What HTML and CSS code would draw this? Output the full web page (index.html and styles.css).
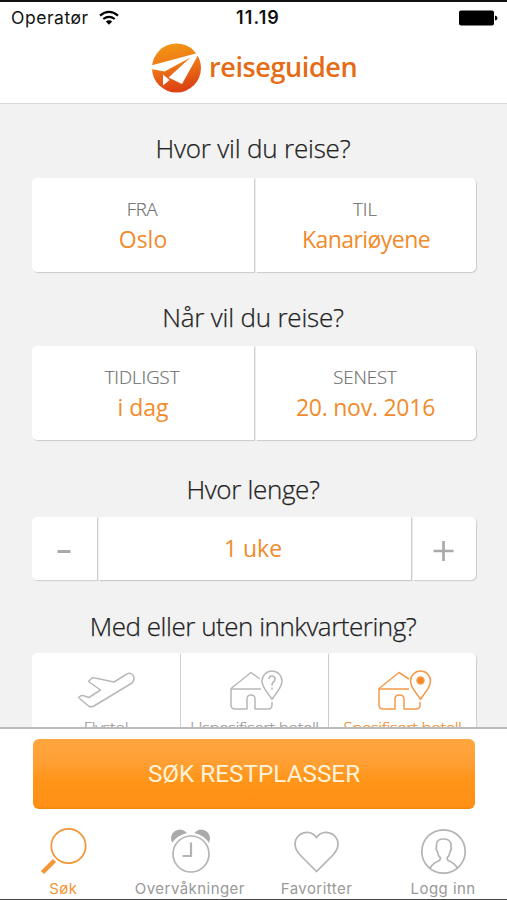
FILE: index.html
```html
<!DOCTYPE html>
<html lang="no">
<head>
<meta charset="utf-8">
<title>Reiseguiden</title>
<link rel="stylesheet" href="styles.css">
</head>
<body>
<div class="app">
  <header class="header">
    <div class="status">
      <div class="carrier"><span class="operator">Operatør</span>
        <svg class="wifi" width="20" height="16" viewBox="0 0 20 16" fill="none" stroke="#000" stroke-width="2.2"><path d="M1 5.6Q10-1.8 19 5.6M4.3 9Q10 4.6 15.7 9"/><path d="M6.8 11.4Q10 9.2 13.2 11.4L10 14.8Z" fill="#000" stroke="none"/></svg>
      </div>
      <span class="time">11.19</span>
      <svg class="battery" width="40" height="16" viewBox="0 0 40 16"><rect x="1" y=".5" width="35" height="15" rx="2"/><path d="M37 5.5Q39.5 6 39.500 8T37 10.5Z"/></svg>
    </div>
    <div class="brand">
      <svg class="logo" width="50" height="50" viewBox="0 0 50 50">
        <defs><linearGradient id="sun" x1="0" y1="0" x2=".2" y2="1"><stop offset="0" stop-color="#f39a12"/><stop offset=".5" stop-color="#ee7818"/><stop offset="1" stop-color="#dc4314"/></linearGradient></defs>
        <circle cx="25.500" cy="25" r="24.500" fill="url(#sun)"/>
        <path fill="#fff" d="M0 22.500L48.500 9.500 31 41 17.500 34.500 39.500 14.500 13.500 28.500 0 26ZM12 31.500L18.500 37 12 42.500Z"/>
      </svg>
      <span class="wordmark">reiseguiden</span>
    </div>
  </header>

  <main class="form">
    <h2 class="question"><span class="q1">Hvor vil du reise?</span></h2>
    <div class="row">
      <div class="cell"><span class="label fra">FRA</span><span class="value oslo">Oslo</span></div>
      <div class="cell"><span class="label til">TIL</span><span class="value kan">Kanariøyene</span></div>
    </div>
    <h2 class="question when"><span class="q2">Når vil du reise?</span></h2>
    <div class="row">
      <div class="cell"><span class="label tid">TIDLIGST</span><span class="value idag">i dag</span></div>
      <div class="cell"><span class="label sen">SENEST</span><span class="value dato">20. nov. 2016</span></div>
    </div>
    <h2 class="question length"><span class="q3">Hvor lenge?</span></h2>
    <div class="row stepper">
      <div class="cell"><svg width="16" height="26" viewBox="0 0 16 26"><path d="M.5 16.500H13.500" stroke="#a9abab" stroke-width="3"/></svg></div>
      <div class="cell"><span class="value uke">1 uke</span></div>
      <div class="cell"><svg width="24" height="26" viewBox="0 0 24 26"><path d="M.5 16H20.500M10.500 6V26" stroke="#a9abab" stroke-width="2.700"/></svg></div>
    </div>
    <h2 class="question stay"><span class="q4">Med eller uten innkvartering?</span></h2>
    <div class="row options">
      <div class="cell option">
        <svg width="60" height="44" viewBox="0 0 60 44"><path d="M2.500 27.500Q5 25 7 25.500L13 27.500 24.500 20 12.500 11.500 16 8Q17 7.500 19 8L38 12 50 4.500Q55 1.500 57.500 6 59 10 56 13L18 36Q15 37.500 12.500 36Z"/></svg>
        <span class="caption">Flystol</span>
      </div>
      <div class="cell option">
        <svg width="60" height="44" viewBox="2 0 60 44"><path d="M37 9L28 2.500 8 18.500V35Q8 39 12 39H24V29Q24 25 28 25T32 29V39H45Q49 39 49 35V32M8 19H38M49 29.500C46 23.500 39 18.500 39 11A10 10 0 0 1 59 11C59 18.500 52 23.500 49 29.500Z"/><path d="M46 9Q46 6 49 6T52 9Q52 11 50 12.500 49 13.500 49 15.500M49 17.500V19.500" stroke-width="1.700"/></svg>
        <span class="caption">Uspesifisert hotell</span>
      </div>
      <div class="cell option active">
        <svg width="60" height="44" viewBox="1 0 60 44"><path d="M37 9L27 2.500 7 18.500V35Q7 39 11 39H23V29Q23 25 27.500 25T32 29V39H44Q48 39 48 35V32M7 19H37M48.500 29.500C45.500 23.500 38.500 18.500 38.500 11A10 10 0 0 1 58.500 11C58.500 18.500 51.500 23.500 48.500 29.500Z"/><circle cx="48.500" cy="10.500" r="3.500" fill="#f3892b"/></svg>
        <span class="caption">Spesifisert hotell</span>
      </div>
    </div>
  </main>

  <footer class="footer">
    <button class="search"><span class="cta">SØK RESTPLASSER</span></button>
    <nav class="tabs">
      <a class="tab current"><svg width="48" height="48" viewBox="0 0 48 48"><circle cx="29.500" cy="19" r="17.200"/><path d="M15.500 33.500L3.500 45.500" stroke-width="4.500"/></svg><span class="t1">Søk</span></a>
      <a class="tab"><svg width="48" height="48" viewBox="0 0 48 48"><path class="solid" d="M6 16Q3 8 9 4 15.500 0 21 6 11 8.500 6 16ZM43 16Q46 8 40 4 33.500 0 28.500 6 38.500 8.500 43 16Z"/><circle cx="25" cy="27" r="18"/><path d="M25 15.500V29H16.500" stroke-width="2.200"/></svg><span class="t2">Overvåkninger</span></a>
      <a class="tab"><svg width="48" height="48" viewBox="0 0 48 48"><path d="M24.500 44.500L8.500 28.500Q3 23 3 16.500A11.800 11.800 0 0 1 24.500 10.500A11.800 11.800 0 0 1 46 16.500Q46 23 40.500 28.500Z"/></svg><span class="t3">Favoritter</span></a>
      <a class="tab"><svg width="48" height="48" viewBox="0 0 48 48"><circle cx="24.500" cy="24.500" r="21.700"/><path d="M11 41Q14 36 20.500 33.500L21.500 31Q19 29 18.500 25 16.500 22 17.500 20V17Q18 12 24.500 12T32 17V20Q33 22 31 25 30.500 29 28 31L29 33.500Q35.500 36 38.500 41"/></svg><span class="t4">Logg inn</span></a>
    </nav>
  </footer>
</div>
</body>
</html>
```

FILE: styles.css
```css
* { box-sizing: border-box; }
body { margin: 0; background: #f2f2f2; }
.app {
  width: 507px; height: 900px; overflow: hidden;
  display: flex; flex-direction: column;
  border-top: 2px solid #111; border-bottom: 1px solid #444;
  font-family: "Open Sans", sans-serif;
}
.header { height: 102px; flex: none; background: #fff; border-bottom: 1px solid #d8d8d8; }
.status {
  height: 32px; padding: 0 9px 0 11px;
  display: grid; grid-template-columns: 1fr auto 1fr; align-items: center;
  font: 17.5px/32px Inter, sans-serif; color: #111;
}
.carrier { display: flex; align-items: center; gap: 10px; }
.operator { letter-spacing: .55px; }
.time { font-weight: 600; font-size: 18px; letter-spacing: 1.1px; padding-left: 7px; }
.battery { justify-self: end; }
.brand { display: flex; align-items: center; gap: 8px; padding: 9px 0 0 151px; }
.wordmark { font-size: 27px; line-height: 47px; height: 50px; font-weight: 600; letter-spacing: -.4px; color: #e56b15; }

.form { flex: 1; min-height: 0; overflow: hidden; padding: 0 31px 0 32px; }
.question {
  margin: 0; height: 74px; padding: 25px 2px 0 0;
  font-size: 26px; line-height: 38px; font-weight: 300; color: #222;
  -webkit-text-stroke: .25px #222;
  text-align: center; white-space: nowrap; letter-spacing: -.2px;
}
.when { padding-top: 26px; }
.length { height: 77px; padding-top: 30px; letter-spacing: -.35px; }
.stay { height: 73px; padding-top: 26px; letter-spacing: -.48px; }
.row { display: grid; grid-template-columns: 222px 1fr; gap: 2px; height: 94px; }
.stepper { grid-template-columns: 65px 1fr 63px; height: 63px; margin-bottom: 1px; }
.options { grid-template-columns: 148px 147px 1fr; gap: 1px; height: 100px; margin-top: -1px; }
.cell {
  display: flex; flex-direction: column; align-items: center; justify-content: center;
  background: #fff; box-shadow: 1px 1px 1px #ccc; white-space: nowrap; min-width: 0;
  padding-bottom: 2px;
}
.cell:first-child { border-radius: 5px 0 0 5px; }
.cell:last-child { border-radius: 0 5px 5px 0; }
.label {
  font-size: 18.5px; line-height: 30px; font-weight: 300; color: #707070;
  -webkit-text-stroke: .2px #707070; padding-right: 2px;
}
.fra { letter-spacing: -.3px; }
.value { font-size: 23px; line-height: 30px; color: #f18b2c; }
.kan { letter-spacing: -.55px; }
.dato { letter-spacing: -.25px; padding-right: 1px; }
.uke { padding-right: 4px; }
.option { justify-content: flex-start; padding-top: 17px; }
.option svg { fill: none; stroke: #b8b8b8; stroke-width: 1.5; stroke-linejoin: round; }
.caption {
  font-size: 17px; line-height: 27px; font-weight: 300; letter-spacing: -.45px; color: #999;
  -webkit-text-stroke: .2px currentColor;
}
.active svg { stroke: #f49b48; }
.active .caption { color: #f18b2c; }

.footer { height: 172px; flex: none; background: #fff; border-top: 2px solid #bbb; padding: 10px 32px 0 33px; }
.search {
  display: block; width: 100%; height: 70px; border: 0; border-radius: 6px; padding: 0;
  background: linear-gradient(#ffa63e, #ffa036 30%, #ff9519 58%, #ff9015 96%, #f58205);
  font: 24.3px/70px Roboto, sans-serif; color: #fff3dc;
}
.tabs { display: grid; grid-template-columns: repeat(4, 126.600px); margin: 18px -33px 0; }
.tab {
  display: flex; flex-direction: column; align-items: center; gap: 4px;
  font: 15px/20px Inter, sans-serif; color: #999; white-space: nowrap; letter-spacing: .45px;
}
.tab svg { fill: none; stroke: #b4b4b4; stroke-width: 1.700; }
.tab .solid { fill: #aaa; stroke: none; }
.tab.current { color: #f39535; }
.tab.current svg { stroke: #f39535; }
```
